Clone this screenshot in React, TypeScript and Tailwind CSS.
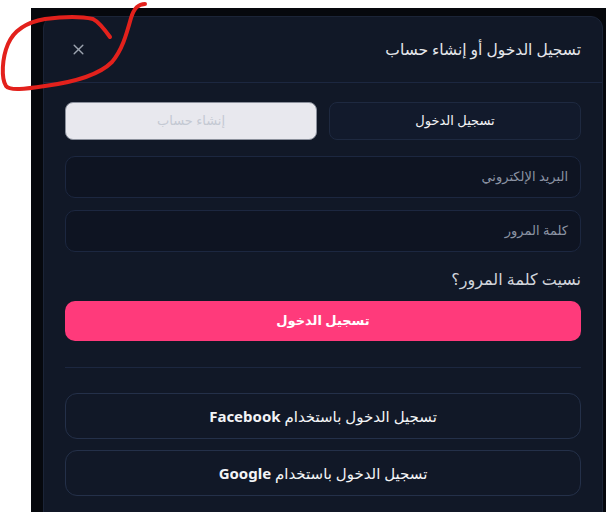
import React from 'react';

const FONT = { fontFamily: '"Noto Sans", "DejaVu Sans", sans-serif' };

const App = () => {
  return (
    <div className="relative h-[512px] w-[606px] overflow-hidden bg-white" style={FONT}>
      {/* backdrop */}
      <div className="ml-[31px] mt-[8px] h-[504px] overflow-hidden bg-[#06080d] pl-[12px] pt-[8px]">
        <div dir="rtl" className="h-[520px] w-[560px] rounded-xl border border-[#1b2437] bg-[#111827]">
          {/* header */}
          <div className="flex h-[66px] items-center justify-between border-b border-[#1c2740] pl-[26px] pr-[21px]">
            <h2 className="text-[15.5px] font-medium text-[#e5e7eb]">تسجيل الدخول أو إنشاء حساب</h2>
            <button className="flex h-[16px] w-[16px] items-center justify-center text-[#9ca3af]">
              <svg width="11" height="11" viewBox="0 0 14 14" fill="none" stroke="currentColor" strokeWidth="1.8" strokeLinecap="round">
                <path d="M1.5 1.5l11 11M12.5 1.5l-11 11" />
              </svg>
            </button>
          </div>

          <div className="px-[21px] pt-[19px]">
            {/* tabs */}
            <div className="grid h-[38px] grid-cols-2 gap-3">
              <button className="rounded-lg border border-[#1e2940] bg-[#121a2c] text-[13px] text-[#f3f4f6]">
                تسجيل الدخول
              </button>
              <button className="rounded-lg border border-[#8b909c] bg-[#e8e8ee] text-[13px] text-[#c4c9d3]">
                إنشاء حساب
              </button>
            </div>

            <div className="mt-4 flex h-[42px] items-center rounded-[10px] border border-[#1c2740] bg-[#0e1422] px-3 text-[13px] text-[#8b93a3]">
              البريد الإلكتروني
            </div>
            <div className="mt-3 flex h-[42px] items-center rounded-[10px] border border-[#1c2740] bg-[#0e1422] px-3 text-[13px] text-[#8b93a3]">
              كلمة المرور
            </div>

            <p className="mt-[15px] text-[16px] leading-6 text-[#d1d5db]">نسيت كلمة المرور؟</p>

            <button className="mt-[10px] h-[40px] w-full rounded-[10px] bg-[#ff3a7b] text-[13px] font-bold text-white">
              تسجيل الدخول
            </button>

            <div className="mt-[26px] border-t border-[#1c2740]" />

            <button className="mt-[25px] h-[46px] w-full rounded-xl border border-[#243049] text-[15px] font-medium text-[#f3f4f6]">
              تسجيل الدخول باستخدام <span className="font-bold">Facebook</span>
            </button>
            <button className="mt-[11px] h-[46px] w-full rounded-xl border border-[#243049] text-[15px] font-medium text-[#f3f4f6]">
              تسجيل الدخول باستخدام <span className="font-bold">Google</span>
            </button>
          </div>
        </div>
      </div>

      {/* red annotation scribble */}
      <svg className="pointer-events-none absolute left-0 top-0" width="160" height="100" viewBox="0 0 160 100" fill="none">
        <path
          d="M145 4 C 138 4, 134 8, 131 18 C 126 36, 122 50, 112 62 C 100 74, 75 82, 45 86 C 25 89, 10 91, 6 86 C 1 78, 2 58, 8 44 C 14 30, 28 22, 45 19 C 60 17, 80 16, 93 19 C 99 22, 105 30, 110 37"
          stroke="#e3211c"
          strokeWidth="4"
          strokeLinecap="round"
          strokeLinejoin="round"
        />
      </svg>
    </div>
  );
};

export default App;
